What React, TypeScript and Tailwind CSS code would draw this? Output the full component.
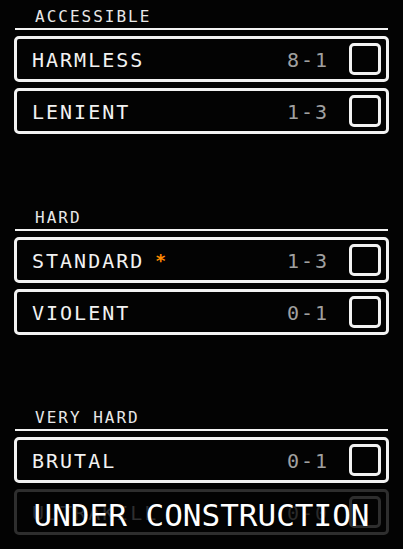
import React from "react";

type Row = { name: string; score: string; star?: boolean };

function DiffRow({ r, dim }: { r: Row; dim?: boolean }) {
  return (
    <div
      className={
        "h-[46px] border-[3px] rounded-[5px] flex items-center pl-[15px] pr-[5px] " +
        (dim ? "border-[#2e2e2e]" : "border-[#f2f2f2]")
      }
    >
      <div
        className={
          "pt-[2px] text-[20px] leading-[20px] tracking-[2px] flex items-center " +
          (dim ? "text-[#2f2f2f]" : "text-[#f2f2f2]")
        }
      >
        <span>{r.name}</span>
        {r.star && (
          <span className="ml-[11px] text-[#ff8a00] text-[18px] leading-[20px] font-bold">*</span>
        )}
      </div>
      <div className="flex-1" />
      <div
        className={
          "pt-[2px] text-[20px] leading-[20px] tracking-[2px] mr-[20px] " +
          (dim ? "text-[#2a2a2a]" : "text-[#a0a0a0]")
        }
      >
        {r.score}
      </div>
      <div
        className={
          "w-[32px] h-[32px] border-[3px] rounded-[5px] " +
          (dim ? "border-[#2e2e2e]" : "border-[#f2f2f2]")
        }
      />
    </div>
  );
}

function Section({ title, rows, last, h }: { title: string; rows: Row[]; last?: boolean; h: string }) {
  return (
    <div className={h + " flex flex-col"}>
      <div className="h-[28px] pt-[9px] pl-[21px] text-[16px] leading-[16px] tracking-[2px] text-[#e8e8e8]">
        {title}
      </div>
      <div className="h-[2px] mx-[1px] bg-[#f2f2f2]" />
      <div className="mt-[6px] flex flex-col gap-[6px]">
        <DiffRow r={rows[0]} />
        {last ? (
          <div className="relative">
            <DiffRow r={rows[1]} dim />
            <div className="absolute inset-0 flex items-center justify-center pt-[7px] text-[31px] leading-[31px] text-white [text-shadow:0_0_2px_#000]">
              UNDER CONSTRUCTION
            </div>
          </div>
        ) : (
          <DiffRow r={rows[1]} />
        )}
      </div>
    </div>
  );
}

export default function App() {
  return (
    <div className="w-[403px] h-[549px] bg-[#030303] overflow-hidden px-[14px] font-['DejaVu_Sans_Mono',monospace]">
      <Section
        h="h-[201px]"
        title="ACCESSIBLE"
        rows={[
          { name: "HARMLESS", score: "8-1" },
          { name: "LENIENT", score: "1-3" },
        ]}
      />
      <Section
        h="h-[200px]"
        title="HARD"
        rows={[
          { name: "STANDARD", score: "1-3", star: true },
          { name: "VIOLENT", score: "0-1" },
        ]}
      />
      <Section
        h="h-[148px]"
        title="VERY HARD"
        last
        rows={[
          { name: "BRUTAL", score: "0-1" },
          { name: "ULTRAKILL", score: "0-0" },
        ]}
      />
    </div>
  );
}
